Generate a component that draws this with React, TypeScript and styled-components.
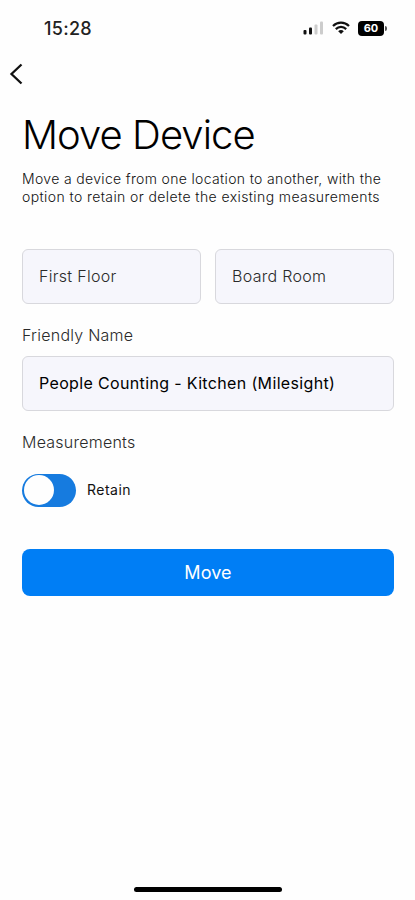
import React from "react";
import styled, { createGlobalStyle } from "styled-components";

const GlobalStyle = createGlobalStyle`
  * { box-sizing: border-box; }
  body {
    margin: 0;
    background: #fff;
    color: #111;
    font-family: Inter, "Liberation Sans", sans-serif;
  }
`;

const Screen = styled.div`
  display: flex;
  flex-direction: column;
  height: 900px;
  width: 415px;
  overflow: hidden;
  background: #fefefe;
`;

const StatusBar = styled.header`
  display: flex;
  align-items: center;
  justify-content: space-between;
  height: 56px;
  padding: 0 28px 0 44px;
`;

const Time = styled.span`
  font-size: 18px;
  font-weight: 500;
  letter-spacing: 0.3px;
  color: #222;
`;

const StatusIcons = styled.div`
  display: flex;
  align-items: center;
  gap: 8px;
`;

const Battery = styled.div`
  display: flex;
  align-items: center;
  gap: 1px;

  &::after {
    content: "";
    width: 2px;
    height: 5px;
    border-radius: 0 2px 2px 0;
    background: #555;
  }
`;

const BatteryBody = styled.span`
  width: 26px;
  height: 15px;
  border-radius: 4px;
  background: #000;
  color: #fff;
  font-size: 11px;
  font-weight: 700;
  line-height: 15px;
  text-align: center;
`;

const NavBar = styled.nav`
  display: flex;
  align-items: center;
  height: 36px;
  padding-left: 9px;
`;

const BackButton = styled.button`
  display: flex;
  padding: 0;
  border: 0;
  background: none;
`;

const Content = styled.main`
  display: flex;
  flex: 1;
  flex-direction: column;
  padding: 18px 21px 0 22px;
`;

const Title = styled.h1`
  margin: 0;
  font-size: 40px;
  font-weight: 350;
  line-height: 50px;
  letter-spacing: -0.95px;
  color: #000;
`;

const Description = styled.p`
  margin: 10px 0 0;
  font-size: 14px;
  font-weight: 300;
  line-height: 18px;
  color: #111;
  white-space: nowrap;
`;

const DescriptionLine = styled.span<{ $tracking: number }>`
  display: block;
  letter-spacing: ${(p) => p.$tracking}px;
`;

const FieldRow = styled.div`
  display: grid;
  grid-template-columns: 1fr 1fr;
  gap: 14px;
  margin-top: 42.5px;
`;

const Field = styled.div<{ $strong?: boolean }>`
  display: flex;
  align-items: center;
  height: 55px;
  padding: 0 16px;
  border: 1px solid #d8d8dd;
  border-radius: 6px;
  background: #f6f6fc;
  font-size: 16px;
  font-weight: ${(p) => (p.$strong ? 400 : 350)};
  letter-spacing: ${(p) => (p.$strong ? 0.35 : 0.3)}px;
  color: ${(p) => (p.$strong ? "#000" : "#2a2a2a")};
`;

const Label = styled.div`
  margin: 21px 0 11px;
  font-size: 16px;
  font-weight: 350;
  line-height: 20px;
  letter-spacing: 0.24px;
  color: #2a2a2a;
`;

const ToggleRow = styled.div`
  display: flex;
  align-items: center;
  gap: 11px;
  margin-top: 11px;
`;

const Toggle = styled.button`
  display: flex;
  align-items: center;
  width: 54px;
  height: 33px;
  padding: 0 1.5px;
  border: 0;
  border-radius: 17px;
  background: #167bdf;
`;

const Knob = styled.span`
  width: 30px;
  height: 30px;
  border-radius: 50%;
  background: #fefefe;
`;

const ToggleLabel = styled.span`
  padding-bottom: 1px;
  font-size: 14px;
  letter-spacing: 0.5px;
`;

const MoveButton = styled.button`
  height: 47px;
  margin-top: 42.5px;
  padding: 0;
  border: 0;
  border-radius: 8px;
  background: #007ef5;
  color: #fff;
  font-family: inherit;
  font-size: 18px;
  font-weight: 400;
  letter-spacing: 0.1px;
`;

const HomeIndicator = styled.div`
  align-self: center;
  width: 148px;
  height: 5px;
  margin-bottom: 8px;
  border-radius: 3px;
  background: #000;
`;

function SignalIcon() {
  return (
    <svg width="21" height="14" viewBox="0 0 21 14">
      <rect x="0.5" y="9" width="3" height="4.5" rx="1" fill="#111" />
      <rect x="6" y="6.5" width="3" height="7" rx="1" fill="#111" />
      <rect x="11.5" y="3.5" width="3" height="10" rx="1" fill="#ccc" />
      <rect x="17" y="0.5" width="3" height="13" rx="1" fill="#ccc" />
    </svg>
  );
}

function WifiIcon() {
  return (
    <svg width="18" height="14" viewBox="0 0 18 14" fill="none" stroke="#111" strokeWidth="2.2">
      <path d="M1 5C5.5 0.5 12.5 0.5 17 5" />
      <path d="M3.8 8.1C6.8 5.1 11.2 5.1 14.2 8.1" />
      <path d="M6.2 10.2C7.8 8.6 10.2 8.6 11.8 10.2L9 13Z" fill="#111" stroke="none" />
    </svg>
  );
}

export default function App() {
  return (
    <>
      <GlobalStyle />
      <Screen>
        <StatusBar>
          <Time>15:28</Time>
          <StatusIcons>
            <SignalIcon />
            <WifiIcon />
            <Battery>
              <BatteryBody>60</BatteryBody>
            </Battery>
          </StatusIcons>
        </StatusBar>
        <NavBar>
          <BackButton aria-label="Back">
            <svg width="14" height="22" viewBox="0 0 14 22" fill="none" stroke="#111" strokeWidth="2.3">
              <path d="M12.5 1.5L2.5 11L12.5 20.5" />
            </svg>
          </BackButton>
        </NavBar>
        <Content>
          <Title>Move Device</Title>
          <Description>
            <DescriptionLine $tracking={0.34}>
              Move a device from one location to another, with the
            </DescriptionLine>
            <DescriptionLine $tracking={0.4}>
              option to retain or delete the existing measurements
            </DescriptionLine>
          </Description>
          <FieldRow>
            <Field>First Floor</Field>
            <Field>Board Room</Field>
          </FieldRow>
          <Label>Friendly Name</Label>
          <Field $strong>People Counting - Kitchen (Milesight)</Field>
          <Label>Measurements</Label>
          <ToggleRow>
            <Toggle role="switch" aria-checked="false" aria-label="Retain">
              <Knob />
            </Toggle>
            <ToggleLabel>Retain</ToggleLabel>
          </ToggleRow>
          <MoveButton>Move</MoveButton>
        </Content>
        <HomeIndicator />
      </Screen>
    </>
  );
}
